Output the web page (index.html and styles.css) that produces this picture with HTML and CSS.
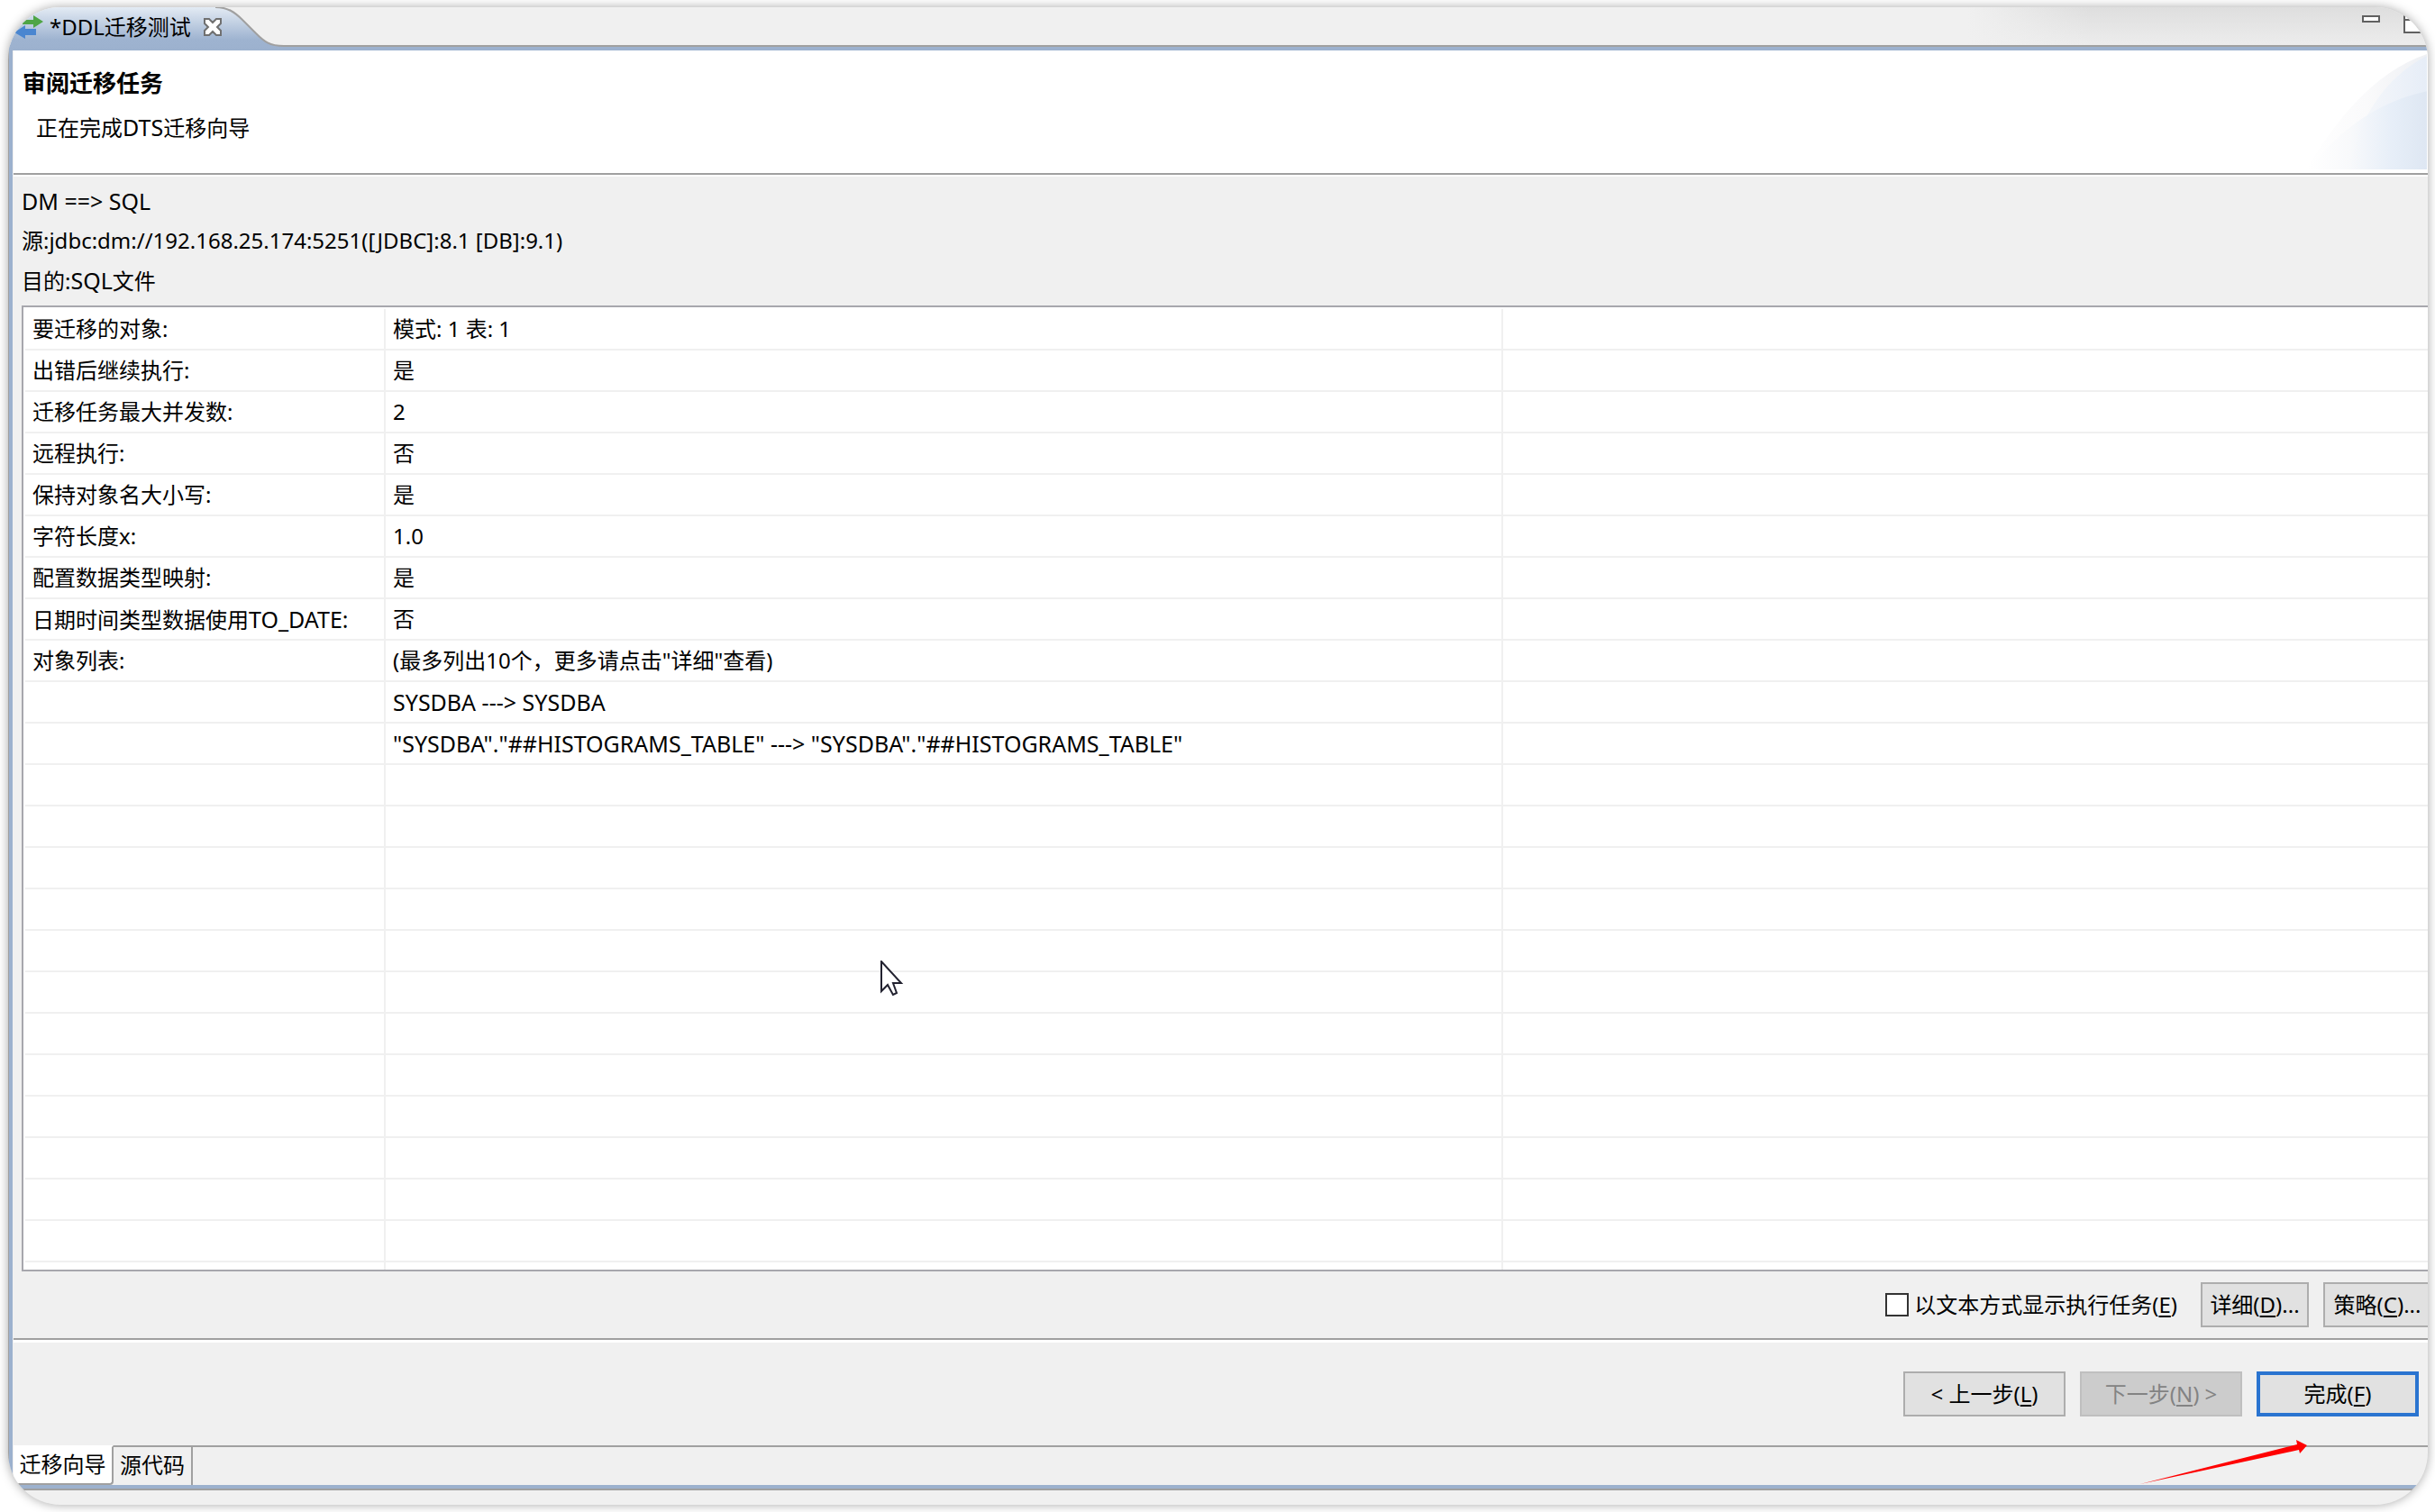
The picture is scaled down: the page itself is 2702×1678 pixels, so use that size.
FILE: index.html
```html
<!DOCTYPE html>
<html lang="zh-CN">
<head>
<meta charset="utf-8">
<title>DDL迁移测试</title>
<link rel="stylesheet" href="styles.css">
</head>
<body>
<main class="window">
  <div class="tabbar">
    <div class="tab">
      <svg class="tab-shape" viewBox="0 0 306 48" aria-hidden="true">
        <defs>
          <linearGradient id="tabfill" x1="0" y1="0" x2="0" y2="1">
            <stop offset="0" stop-color="#e3ebf4"/>
            <stop offset="0.75" stop-color="#9eb3d0"/>
            <stop offset="1" stop-color="#9cb1ce"/>
          </linearGradient>
        </defs>
        <path d="M0 0H230C244 0 252 6 260 14L275 29C284 38 290 43 306 43V48H0Z" fill="url(#tabfill)"/>
        <path d="M230 0C244 0 252 6 260 14L275 29C284 38 290 43 306 43" fill="none" stroke="#a0a0a0" stroke-width="2"/>
      </svg>
      <svg class="tab-icon" viewBox="0 0 34 28" aria-hidden="true">
        <path d="M10 6H22V1L33 8L22 15V11H10Z" fill="#4fa545"/>
        <path d="M25 16H13V12L1 20L13 27V23H25Z" fill="#4a86d0"/>
      </svg>
      <span class="tab-title">*DDL迁移测试</span>
      <button class="icon-button tab-close" aria-label="关闭">
        <svg width="22" height="22" viewBox="0 0 22 22"><path d="M2 2H7L11 6L15 2H20V7L16 11L20 15V20H15L11 16L7 20H2V15L6 11L2 7Z" fill="#fff" stroke="#707070" stroke-width="2"/></svg>
      </button>
    </div>
    <div class="window-buttons">
      <button class="icon-button" aria-label="最小化">
        <svg width="22" height="22" viewBox="0 0 22 22"><path d="M2 2H20V8H2Z" fill="#fff" stroke="#606060" stroke-width="2"/></svg>
      </button>
      <button class="icon-button" aria-label="最大化">
        <svg width="28" height="22" viewBox="0 0 28 22"><path d="M2 1H27V20H2ZM2 6H27" fill="#fff" stroke="#606060" stroke-width="2"/></svg>
      </button>
    </div>
  </div>

  <div class="editor">
    <header class="wizard-header">
      <div>
        <h1>审阅迁移任务</h1>
        <p>正在完成<span class="latin">DTS</span>迁移向导</p>
      </div>
      <svg class="banner" viewBox="0 0 136 130" aria-hidden="true">
        <defs>
          <linearGradient id="g1"><stop offset="0" stop-color="#fff"/><stop offset="0.5" stop-color="#fafafb"/><stop offset="1" stop-color="#eef0f4"/></linearGradient>
          <linearGradient id="g2"><stop offset="0" stop-color="#f8f9fb"/><stop offset="1" stop-color="#e6edf7"/></linearGradient>
          <linearGradient id="g3"><stop offset="0" stop-color="#fff"/><stop offset="0.35" stop-color="#f8f9fb"/><stop offset="0.7" stop-color="#e6eef8"/><stop offset="1" stop-color="#dde6f2"/></linearGradient>
        </defs>
        <path d="M0 130C30 80 75 20 136 0V130Z" fill="url(#g1)"/>
        <path d="M50 130C56 75 90 25 136 2V130Z" fill="url(#g2)"/>
        <path d="M2 130C40 84 80 54 136 42V130Z" fill="url(#g3)" opacity="0.9"/>
      </svg>
    </header>

    <section class="summary">
      <p class="latin">DM ==&gt; SQL</p>
      <p>源:jdbc:dm://192.168.25.174:5251([JDBC]:8.1 [DB]:9.1)</p>
      <p>目的:<span class="latin">SQL</span>文件</p>
    </section>

    <div class="table-box">
      <table>
        <colgroup><col class="col-name"><col class="col-value"><col></colgroup>
        <tbody>
          <tr><td>要迁移的对象:</td><td>模式: 1 表: 1</td><td></td></tr>
          <tr><td>出错后继续执行:</td><td>是</td><td></td></tr>
          <tr><td>迁移任务最大并发数:</td><td>2</td><td></td></tr>
          <tr><td>远程执行:</td><td>否</td><td></td></tr>
          <tr><td>保持对象名大小写:</td><td>是</td><td></td></tr>
          <tr><td>字符长度x:</td><td>1.0</td><td></td></tr>
          <tr><td>配置数据类型映射:</td><td>是</td><td></td></tr>
          <tr><td>日期时间类型数据使用<span class="latin">TO_DATE:</span></td><td>否</td><td></td></tr>
          <tr><td>对象列表:</td><td>(最多列出10个，更多请点击"详细"查看)</td><td></td></tr>
          <tr><td></td><td class="latin">SYSDBA ---&gt; SYSDBA</td><td></td></tr>
          <tr><td></td><td class="latin">"SYSDBA"."##HISTOGRAMS_TABLE" ---&gt; "SYSDBA"."##HISTOGRAMS_TABLE"</td><td></td></tr>
          <tr><td></td><td></td><td></td></tr>
          <tr><td></td><td></td><td></td></tr>
          <tr><td></td><td></td><td></td></tr>
          <tr><td></td><td></td><td></td></tr>
          <tr><td></td><td></td><td></td></tr>
          <tr><td></td><td></td><td></td></tr>
          <tr><td></td><td></td><td></td></tr>
          <tr><td></td><td></td><td></td></tr>
          <tr><td></td><td></td><td></td></tr>
          <tr><td></td><td></td><td></td></tr>
          <tr><td></td><td></td><td></td></tr>
          <tr><td></td><td></td><td></td></tr>
          <tr><td></td><td></td><td></td></tr>
        </tbody>
      </table>
    </div>

    <div class="options">
      <label class="check"><input type="checkbox"><span>以文本方式显示执行任务(<u>E</u>)</span></label>
      <button class="btn small">详细(<u>D</u>)...</button>
      <button class="btn small">策略(<u>C</u>)...</button>
    </div>

    <footer class="wizard-buttons">
      <button class="btn">&lt; 上一步(<u>L</u>)</button>
      <button class="btn" disabled>下一步(<u>N</u>) &gt;</button>
      <button class="btn primary">完成(<u>F</u>)</button>
    </footer>

    <nav class="page-tabs">
      <button class="page-tab active">迁移向导</button>
      <button class="page-tab">源代码</button>
      <div class="page-rest"></div>
    </nav>
  </div>
  <div class="bottom-strip"></div>

  <svg class="cursor" viewBox="0 0 26 40" aria-hidden="true"><path d="M1 1V34L8 27L14 38L18 36L14 25H23Z" fill="#fff" stroke="#222230" stroke-width="2"/></svg>
  <svg class="pointer" viewBox="0 0 186 50" aria-hidden="true"><path d="M0 49L174 5L173 0L185 6L177 15L176 11Z" fill="#f00"/></svg>
</main>
</body>
</html>
```
FILE: styles.css
```css
* {
  box-sizing: border-box;
}

body {
  margin: 0;
  padding: 8px 8px 8px 9px;
  background: #fff;
  color: #000;
  font: 24px/36px "Noto Sans", "Noto Sans CJK SC", sans-serif;
}

h1,
p {
  margin: 0;
}

button {
  margin: 0;
  padding: 0;
  color: inherit;
  font: inherit;
}

u {
  text-underline-offset: 3px;
}

.latin {
  font-size: 25px;
}

.window {
  position: relative;
  display: flex;
  flex-direction: column;
  min-height: calc(100vh - 16px);
  overflow: hidden;
  border-radius: 58px;
  background: #f0f0f0;
  box-shadow: 0 0 12px rgba(0, 0, 0, 0.35);
}

.tabbar {
  display: flex;
  justify-content: space-between;
  height: 48px;
  border-bottom: 4px solid #9cb1ce;
  background: linear-gradient(to right, rgba(240, 240, 240, 1) 81%, rgba(240, 240, 240, 0) 86%), linear-gradient(#dedede, #ededed);
  box-shadow: inset 0 -2px #a0a0a0;
}

.tab {
  position: relative;
  display: flex;
  align-items: center;
  width: 306px;
  height: 44px;
  padding-left: 6px;
}

.tab-shape {
  position: absolute;
  top: 0;
  left: 0;
  width: 306px;
  height: 48px;
}

.tab-icon {
  position: relative;
  width: 34px;
  height: 28px;
}

.tab-title {
  position: relative;
  margin: 0 13px 0 6px;
}

.icon-button {
  position: relative;
  display: flex;
  border: 0;
  background: none;
}

.window-buttons {
  display: flex;
  gap: 24px;
  padding-top: 8px;
}

.editor {
  display: flex;
  flex: 1;
  flex-direction: column;
  padding: 0 0 4px 5px;
  border-bottom: 2px solid #a0a0a0;
  border-left: 1px solid #a0a0a0;
  box-shadow: inset 4px 0 #9cb1ce, inset 0 -4px #9cb1ce;
}

.wizard-header {
  display: flex;
  align-items: flex-start;
  justify-content: space-between;
  height: 138px;
  padding: 4px 0 0 10px;
  border-bottom: 2px solid #a0a0a0;
  background: #fff;
}

.wizard-header h1 {
  margin-top: 14px;
  font-size: 26px;
  font-weight: 700;
}

.wizard-header p {
  margin: 13px 0 0 15px;
}

.banner {
  width: 136px;
  height: 128px;
}

.summary {
  padding: 5px 0 5px 9px;
  border-top: 2px solid #fff;
}

.summary p {
  line-height: 44px;
}

.table-box {
  flex: 1 1 0;
  min-height: 300px;
  margin-left: 9px;
  padding: 2px 0 0 2px;
  overflow: hidden;
  border: 2px solid #a7a7ad;
  border-right: 0;
  background: #fff;
}

table {
  width: 100%;
  table-layout: fixed;
  border-collapse: separate;
  border-spacing: 0;
}

.col-name {
  width: 400px;
}

.col-value {
  width: 1240px;
}

td {
  height: 46px;
  padding: 0 0 0 8px;
  border-right: 2px solid #f0f0f0;
  border-bottom: 2px solid #f0f0f0;
  white-space: nowrap;
}

td:last-child {
  border-right: 0;
}

.options {
  display: flex;
  align-items: center;
  justify-content: flex-end;
  height: 76px;
  border-bottom: 2px solid #a0a0a0;
}

.check {
  display: flex;
  align-items: center;
  gap: 6px;
  margin-right: 26px;
}

.check input {
  width: 26px;
  height: 26px;
  margin: 0;
  appearance: none;
  border: 2px solid #333;
  background: #fff;
}

.btn {
  flex: none;
  width: 180px;
  height: 50px;
  border: 2px solid #adadad;
  background: #e1e1e1;
  white-space: nowrap;
}

.btn.small {
  width: 120px;
}

.btn.small:last-child {
  margin: 0 -4px 0 16px;
}

.btn:disabled {
  border-color: #bfbfbf;
  background: #ccc;
  color: #838383;
}

.btn.primary {
  border: 4px solid #2a74d0;
}

.wizard-buttons {
  display: flex;
  justify-content: flex-end;
  gap: 16px;
  padding: 32px 10px 32px 0;
  border-top: 3px solid #fff;
}

.page-tabs {
  display: flex;
  height: 44px;
}

.page-tab {
  width: 88px;
  padding-bottom: 2px;
  border: 0;
  border-top: 2px solid #a0a0a0;
  border-right: 2px solid #a0a0a0;
  background: none;
}

.page-tab.active {
  width: 111px;
  border-top-color: #fff;
  border-bottom: 2px solid #a0a0a0;
  border-bottom-right-radius: 4px;
  background: #fff;
}

.page-rest {
  flex: 1;
  border-top: 2px solid #a0a0a0;
}

.bottom-strip {
  height: 16px;
}

.cursor {
  position: absolute;
  top: 1058px;
  left: 968px;
  width: 26px;
  height: 40px;
}

.pointer {
  position: absolute;
  right: 133px;
  bottom: 22px;
  width: 186px;
  height: 50px;
}
```
